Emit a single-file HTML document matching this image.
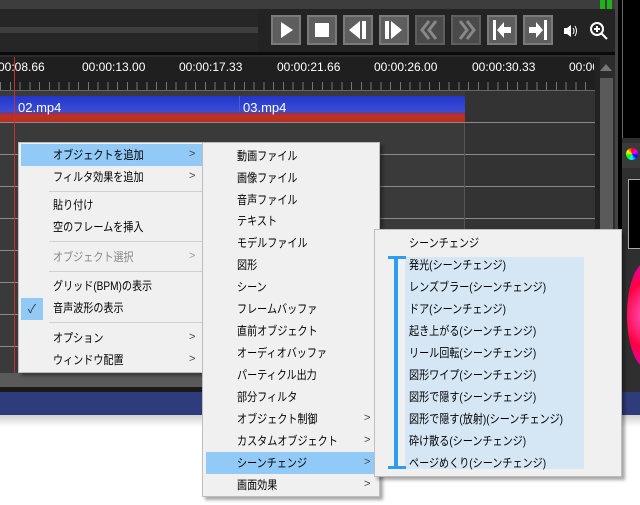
<!DOCTYPE html><html><head><meta charset="utf-8"><style>
*{margin:0;padding:0;box-sizing:border-box}
body{width:640px;height:505px;overflow:hidden;background:#fff;font-family:"Liberation Sans","Noto Sans CJK JP",sans-serif;font-size:12px;position:relative}
.a{position:absolute}
.btn{position:absolute;top:15px;width:30px;height:30px;background:#5e5e5e;border:2px solid #7a7a7a}
.btn svg{position:absolute;left:0;top:-1px}
.lbl{position:absolute;top:60px;color:#fff;font-size:12px}
.m{position:absolute;background:#f0f0f0;border:1px solid #bdbdbd;box-shadow:3px 3px 3px rgba(0,0,0,.35)}
.it{position:absolute;left:0;height:22px;line-height:22px;color:#000;white-space:nowrap;transform:scaleX(.84);transform-origin:0 50%}
.arr{position:absolute;font-size:11px;color:#444}
.sep{position:absolute;height:1px;background:#d0d0d0}
.hl{position:absolute;height:22px;background:#91c9f7}
</style></head><body>
<div class="a" style="left:0;top:0;width:640px;height:415px;background:#2c2c2c"></div>
<div class="a" style="left:0;top:0;width:615px;height:9px;background:#3d3d3d"></div>
<div class="a" style="left:600px;top:0;width:5px;height:9px;background:#1db31d"></div>
<div class="a" style="left:607px;top:0;width:5px;height:9px;background:#1db31d"></div>
<div class="a" style="left:0;top:9px;width:258px;height:43px;background:#262626"></div>
<div class="a" style="left:0;top:27px;width:258px;height:6px;background:#3e3e3e"></div>
<div class="a" style="left:258px;top:9px;width:357px;height:43px;background:#232323"></div>
<div class="a" style="left:0;top:52px;width:615px;height:3px;background:#0a0a0a"></div>
<div class="a" style="left:615px;top:0;width:3px;height:415px;background:#444"></div>
<div class="a" style="left:618px;top:0;width:4px;height:415px;background:#000"></div>
<div class="a" style="left:622px;top:0;width:18px;height:415px;background:#2f2f2f"></div>
<div class="a" style="left:622px;top:0;width:18px;height:138px;background:#000;border-left:1px solid #666"></div>
<div class="a" style="left:622px;top:143px;width:18px;height:25px;background:#3a3a3a"></div>
<div class="a" style="left:626px;top:148px;width:12px;height:12px;border-radius:50%;background:conic-gradient(red,magenta,blue,cyan,lime,yellow,red)"></div>
<div class="a" style="left:628px;top:179px;width:14px;height:70px;background:#000;border:1px solid #aaa"></div>
<div class="a" style="left:627px;top:262px;width:40px;height:106px;border-radius:50%;background:radial-gradient(circle at 80% 50%,#fff 0,#ff40a0 30%,#ff0040 60%,#d000d0 100%)"></div>
<div class="btn" style="left:271px"><svg width="26" height="28"><path d="M8 6 L20 14 L8 22Z" fill="#fff"/></svg></div>
<div class="btn" style="left:307px"><svg width="26" height="28"><rect x="6" y="7" width="14" height="14" fill="#fff"/></svg></div>
<div class="btn" style="left:343px"><svg width="26" height="28"><path d="M15 5 L4 14 L15 23Z" fill="#fff"/><rect x="17" y="5" width="4" height="18" fill="#fff"/></svg></div>
<div class="btn" style="left:379px"><svg width="26" height="28"><rect x="4" y="5" width="4" height="18" fill="#fff"/><path d="M10 5 L21 14 L10 23Z" fill="#fff"/></svg></div>
<div class="btn" style="left:415px;background:#4a4a4a;border-color:#5e5e5e"><svg width="26" height="28"><path d="M12 5 L5 14 L12 23 M19 5 L12 14 L19 23" stroke="#888" stroke-width="3" fill="none"/></svg></div>
<div class="btn" style="left:451px;background:#4a4a4a;border-color:#5e5e5e"><svg width="26" height="28"><path d="M7 5 L14 14 L7 23 M14 5 L21 14 L14 23" stroke="#888" stroke-width="3" fill="none"/></svg></div>
<div class="btn" style="left:487px"><svg width="26" height="28"><rect x="4" y="4" width="3" height="20" fill="#fff"/><path d="M8 14 L15 6 L15 11 L22 11 L22 17 L15 17 L15 22Z" fill="#fff"/></svg></div>
<div class="btn" style="left:523px"><svg width="26" height="28"><rect x="19" y="4" width="3" height="20" fill="#fff"/><path d="M18 14 L11 6 L11 11 L4 11 L4 17 L11 17 L11 22Z" fill="#fff"/></svg></div>
<svg class="a" style="left:562px;top:23px" width="16" height="16"><path d="M2 5h3l4-3v12l-4-3H2z" fill="#fff"/><path d="M11 5q2 3 0 6M13 3q3 5 0 10" stroke="#fff" fill="none"/></svg>
<svg class="a" style="left:588px;top:20px" width="22" height="22"><circle cx="9" cy="9" r="6" stroke="#fff" stroke-width="2" fill="none"/><path d="M6 9h6M9 6v6M13 13l6 6" stroke="#fff" stroke-width="2"/></svg>
<div class="a" style="left:0;top:57px;width:598px;height:34px;background:#1f1f1f"></div>
<div class="lbl" style="left:-2px">00:08.66</div>
<div class="lbl" style="left:82px">00:00:13.00</div>
<div class="lbl" style="left:179px">00:00:17.33</div>
<div class="lbl" style="left:277px">00:00:21.66</div>
<div class="lbl" style="left:374px">00:00:26.00</div>
<div class="lbl" style="left:472px">00:00:30.33</div>
<div class="lbl" style="left:569px;width:25px;overflow:hidden">00:00</div>
<div class="a" style="left:0;top:82px;width:595px;height:8px;background:repeating-linear-gradient(90deg,#777 0 1px,transparent 1px 9.75px)"></div>
<div class="a" style="left:0;top:90px;width:595px;height:1px;background:#666"></div>
<div class="a" style="left:600px;top:64px;width:0;height:0;border:6px solid transparent;border-bottom:7px solid #777;border-top:0"></div>
<div class="a" style="left:600px;top:78px;width:13px;height:310px;background:#5a5a5a"></div>
<div class="a" style="left:595px;top:57px;width:5px;height:330px;background:#222"></div>
<div class="a" style="left:0;top:91px;width:595px;height:282px;background:#333"></div>
<div class="a" style="left:0;top:91px;width:465px;height:282px;background:#3a3a3a"></div>
<div class="a" style="left:0;top:96px;width:465px;height:16px;background:linear-gradient(#2336c8,#3a4ed8)"></div>
<div class="a" style="left:0;top:112px;width:465px;height:10px;background:linear-gradient(#6a3a8a,#c0301e 40%,#b82e20)"></div>
<div class="a" style="left:239px;top:96px;width:1px;height:16px;background:#4a5ad8"></div>
<div class="a" style="left:18px;top:100px;color:#fff;font-size:13px">02.mp4</div>
<div class="a" style="left:243px;top:100px;color:#fff;font-size:13px">03.mp4</div>
<div class="a" style="left:0;top:122px;width:595px;height:1px;background:#8a8a8a"></div>
<div class="a" style="left:0;top:154px;width:595px;height:1px;background:#8a8a8a"></div>
<div class="a" style="left:0;top:186px;width:595px;height:1px;background:#8a8a8a"></div>
<div class="a" style="left:0;top:218px;width:595px;height:1px;background:#8a8a8a"></div>
<div class="a" style="left:0;top:250px;width:595px;height:1px;background:#8a8a8a"></div>
<div class="a" style="left:0;top:282px;width:595px;height:1px;background:#8a8a8a"></div>
<div class="a" style="left:0;top:314px;width:595px;height:1px;background:#8a8a8a"></div>
<div class="a" style="left:0;top:346px;width:595px;height:1px;background:#8a8a8a"></div>
<div class="a" style="left:464px;top:123px;width:1px;height:250px;background:#555"></div>
<div class="a" style="left:14px;top:57px;width:1px;height:316px;background:#c03030"></div>
<div class="a" style="left:0;top:373px;width:595px;height:14px;background:#5a5a5a"></div>
<div class="a" style="left:0;top:387px;width:595px;height:5px;background:#1a1a1a"></div>
<div class="a" style="left:0;top:392px;width:640px;height:23px;background:#2f3c7c"></div>
<div class="a" style="left:0;top:415px;width:640px;height:12px;background:linear-gradient(rgba(0,0,0,.18),rgba(0,0,0,0))"></div>
<div class="m" style="left:18px;top:142px;width:185px;height:231px">
<div class="hl" style="left:2px;top:1px;width:181px"></div>
<div class="it" style="left:34px;top:1px">オブジェクトを追加</div><div class="arr" style="left:170px;top:5px">&gt;</div>
<div class="it" style="left:34px;top:23px">フィルタ効果を追加</div><div class="arr" style="left:170px;top:27px">&gt;</div>
<div class="sep" style="left:30px;top:48px;width:153px"></div>
<div class="it" style="left:34px;top:51px">貼り付け</div>
<div class="it" style="left:34px;top:73px">空のフレームを挿入</div>
<div class="sep" style="left:30px;top:98px;width:153px"></div>
<div class="it" style="left:34px;top:103px;color:#888">オブジェクト選択</div><div class="arr" style="left:170px;top:107px;color:#999">&gt;</div>
<div class="sep" style="left:30px;top:128px;width:153px"></div>
<div class="it" style="left:34px;top:132px">グリッド(BPM)の表示</div>
<div class="a" style="left:2px;top:155px;width:22px;height:22px;background:#91c9f7;text-align:center;line-height:22px;color:#333">✓</div>
<div class="it" style="left:34px;top:154px">音声波形の表示</div>
<div class="sep" style="left:30px;top:179px;width:153px"></div>
<div class="it" style="left:34px;top:184px">オプション</div><div class="arr" style="left:170px;top:188px">&gt;</div>
<div class="it" style="left:34px;top:206px">ウィンドウ配置</div><div class="arr" style="left:170px;top:210px">&gt;</div>
</div>
<div class="m" style="left:202px;top:142px;width:178px;height:355px">
<div class="hl" style="left:3px;top:309px;width:169px"></div>
<div class="it" style="left:34px;top:2px">動画ファイル</div>
<div class="it" style="left:34px;top:24px">画像ファイル</div>
<div class="it" style="left:34px;top:46px">音声ファイル</div>
<div class="it" style="left:34px;top:67px">テキスト</div>
<div class="it" style="left:34px;top:89px">モデルファイル</div>
<div class="it" style="left:34px;top:111px">図形</div>
<div class="it" style="left:34px;top:133px">シーン</div>
<div class="it" style="left:34px;top:155px">フレームバッファ</div>
<div class="it" style="left:34px;top:177px">直前オブジェクト</div>
<div class="it" style="left:34px;top:199px">オーディオバッファ</div>
<div class="it" style="left:34px;top:221px">パーティクル出力</div>
<div class="it" style="left:34px;top:243px">部分フィルタ</div>
<div class="it" style="left:34px;top:265px">オブジェクト制御</div><div class="arr" style="left:161px;top:269px">&gt;</div>
<div class="it" style="left:34px;top:287px">カスタムオブジェクト</div><div class="arr" style="left:161px;top:291px">&gt;</div>
<div class="it" style="left:34px;top:309px">シーンチェンジ</div><div class="arr" style="left:161px;top:313px">&gt;</div>
<div class="it" style="left:34px;top:331px">画面効果</div><div class="arr" style="left:161px;top:335px">&gt;</div>
</div>
<div class="m" style="left:374px;top:229px;width:248px;height:248px">
<div class="a" style="left:30px;top:27px;width:179px;height:212px;background:#d5e6f4"></div>
<div class="a" style="left:19px;top:26px;width:4px;height:213px;background:#2f9cf0"></div>
<div class="a" style="left:13px;top:26px;width:18px;height:3px;background:#2f9cf0"></div>
<div class="a" style="left:13px;top:236px;width:18px;height:3px;background:#2f9cf0"></div>
<div class="it" style="left:34px;top:2px">シーンチェンジ</div>
<div class="it" style="left:34px;top:24px">発光(シーンチェンジ)</div>
<div class="it" style="left:34px;top:46px">レンズブラー(シーンチェンジ)</div>
<div class="it" style="left:34px;top:68px">ドア(シーンチェンジ)</div>
<div class="it" style="left:34px;top:90px">起き上がる(シーンチェンジ)</div>
<div class="it" style="left:34px;top:112px">リール回転(シーンチェンジ)</div>
<div class="it" style="left:34px;top:134px">図形ワイプ(シーンチェンジ)</div>
<div class="it" style="left:34px;top:156px">図形で隠す(シーンチェンジ)</div>
<div class="it" style="left:34px;top:178px">図形で隠す(放射)(シーンチェンジ)</div>
<div class="it" style="left:34px;top:200px">砕け散る(シーンチェンジ)</div>
<div class="it" style="left:34px;top:222px">ページめくり(シーンチェンジ)</div>
</div>
</body></html>
